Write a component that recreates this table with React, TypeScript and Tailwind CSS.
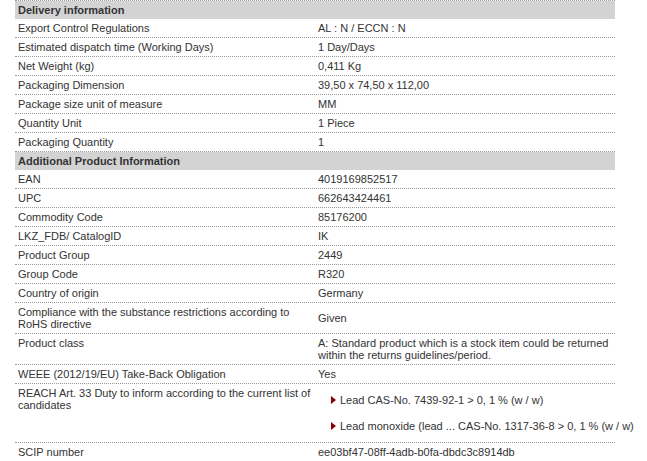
import React from "react";

type Row =
  | { kind: "header"; label: string }
  | { kind: "row"; label: string; value: React.ReactNode };

const Bullet = ({ children }: { children: React.ReactNode }) => (
  <li className="flex items-center h-[12px] whitespace-nowrap">
    <svg width="5" height="8" viewBox="0 0 5 8" className="mr-[4px] shrink-0">
      <polygon points="0,0 5,4 0,8" fill="#8b0000" />
    </svg>
    <span>{children}</span>
  </li>
);

const rows: Row[] = [
  { kind: "header", label: "Delivery information" },
  { kind: "row", label: "Export Control Regulations", value: "AL : N / ECCN : N" },
  { kind: "row", label: "Estimated dispatch time (Working Days)", value: "1 Day/Days" },
  { kind: "row", label: "Net Weight (kg)", value: "0,411 Kg" },
  { kind: "row", label: "Packaging Dimension", value: "39,50 x 74,50 x 112,00" },
  { kind: "row", label: "Package size unit of measure", value: "MM" },
  { kind: "row", label: "Quantity Unit", value: "1 Piece" },
  { kind: "row", label: "Packaging Quantity", value: "1" },
  { kind: "header", label: "Additional Product Information" },
  { kind: "row", label: "EAN", value: "4019169852517" },
  { kind: "row", label: "UPC", value: "662643424461" },
  { kind: "row", label: "Commodity Code", value: "85176200" },
  { kind: "row", label: "LKZ_FDB/ CatalogID", value: "IK" },
  { kind: "row", label: "Product Group", value: "2449" },
  { kind: "row", label: "Group Code", value: "R320" },
  { kind: "row", label: "Country of origin", value: "Germany" },
  {
    kind: "row",
    label: "Compliance with the substance restrictions according to RoHS directive",
    value: "Given",
  },
  {
    kind: "row",
    label: "Product class",
    value: "A: Standard product which is a stock item could be returned within the returns guidelines/period.",
  },
  { kind: "row", label: "WEEE (2012/19/EU) Take-Back Obligation", value: "Yes" },
  {
    kind: "row",
    label: "REACH Art. 33 Duty to inform according to the current list of candidates",
    value: (
      <ul className="my-[7px] ml-[13px] flex flex-col gap-[14px]">
        <Bullet>Lead CAS-No. 7439-92-1 &gt; 0, 1 % (w / w)</Bullet>
        <Bullet>Lead monoxide (lead ... CAS-No. 1317-36-8 &gt; 0, 1 % (w / w)</Bullet>
      </ul>
    ),
  },
  { kind: "row", label: "SCIP number", value: "ee03bf47-08ff-4adb-b0fa-dbdc3c8914db" },
];

export default function App() {
  return (
    <div
      className="w-[647px] h-[461px] overflow-hidden bg-white text-[#333] text-[11px] leading-[12px]"
      style={{ fontFamily: '"Liberation Sans", Arial, sans-serif' }}
    >
      <div className="ml-[15px] w-[600px] border-t border-dotted border-[#999]">
        {rows.map((r, i) =>
          r.kind === "header" ? (
            <div key={i} className="bg-[#d3d3d3] px-[3px] py-[3px] font-bold">
              {r.label}
            </div>
          ) : (
            <div key={i} className="flex border-b border-dotted border-[#999]">
              <div className="w-[300px] shrink-0 px-[3px] py-[3px] self-start">{r.label}</div>
              <div className="flex-1 min-w-0 px-[3px] py-[3px] self-center">{r.value}</div>
            </div>
          )
        )}
      </div>
    </div>
  );
}
